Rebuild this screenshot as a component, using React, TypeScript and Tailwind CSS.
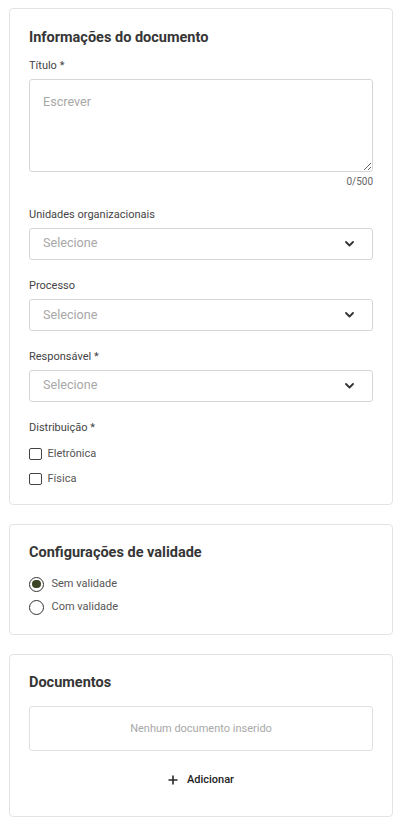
import React from "react";

const font = { fontFamily: "Roboto, 'Noto Sans', Arial, sans-serif" };

function Chevron() {
  return (
    <svg width="9" height="6" viewBox="0 0 9 6" fill="none" className="shrink-0">
      <path d="M1 1 L4.5 4.5 L8 1" stroke="#333" strokeWidth="1.8" strokeLinecap="round" strokeLinejoin="round" />
    </svg>
  );
}

function Label({ children }: { children: React.ReactNode }) {
  return <div className="text-[11px] leading-[16px] text-[#444] mb-[5px]">{children}</div>;
}

function Select() {
  return (
    <div className="h-[32px] w-full rounded-[3px] border border-[#d6d6d6] bg-white flex items-center justify-between pl-[13px] pr-[18px]">
      <span className="text-[12.6px] text-[#a8a8a8]">Selecione</span>
      <Chevron />
    </div>
  );
}

function Checkbox({ label }: { label: string }) {
  return (
    <div className="flex items-center h-[16px] gap-[6px]">
      <span className="w-[12.5px] h-[12.5px] border-[1.5px] border-[#444] rounded-[2px] bg-white shrink-0" />
      <span className="text-[11px] leading-[16px] text-[#555]">{label}</span>
    </div>
  );
}

function Radio({ label, checked }: { label: string; checked?: boolean }) {
  return (
    <div className="flex items-center h-[16px] gap-[7.5px]">
      <span className="w-[15px] h-[15px] rounded-full border-[1.5px] border-[#333] bg-white shrink-0 flex items-center justify-center">
        {checked && <span className="w-[8.5px] h-[8.5px] rounded-full bg-[#3b4426]" />}
      </span>
      <span className="text-[11px] leading-[16px] text-[#555]">{label}</span>
    </div>
  );
}

function Heading({ children }: { children: React.ReactNode }) {
  return <div className="text-[14.5px] leading-[20px] font-bold text-[#363636]">{children}</div>;
}

export default function App() {
  return (
    <div style={font} className="bg-white min-h-[825px] pl-[9px] pr-[10px] pt-[8px] pb-[8px]">
      {/* Card 1 */}
      <div className="border border-[#e3e3e3] rounded-[4px] bg-white px-[19px] pt-[18.5px] pb-[16.5px]">
        <Heading>Informações do documento</Heading>
        <div className="mt-[10.5px]">
          <Label>Título *</Label>
          <textarea
            placeholder="Escrever"
            className="block w-full h-[93px] rounded-[3px] border border-[#d6d6d6] px-[13px] py-[12.5px] text-[12.6px] leading-[18px] text-[#333] placeholder:text-[#a8a8a8] outline-none"
            style={font}
          />
          <div className="mt-[3px] text-right text-[10px] leading-[14px] text-[#666]">0/500</div>
        </div>
        <div className="mt-[17.5px]">
          <Label>Unidades organizacionais</Label>
          <Select />
        </div>
        <div className="mt-[18.5px]">
          <Label>Processo</Label>
          <Select />
        </div>
        <div className="mt-[17.5px]">
          <Label>Responsável *</Label>
          <Select />
        </div>
        <div className="mt-[18.5px]">
          <div className="text-[11px] leading-[16px] text-[#444]">Distribuição *</div>
          <div className="mt-[10px] flex flex-col gap-[9px]">
            <Checkbox label="Eletrônica" />
            <Checkbox label="Física" />
          </div>
        </div>
      </div>

      {/* Card 2 */}
      <div className="mt-[19px] border border-[#e3e3e3] rounded-[4px] bg-white px-[19px] pt-[18.5px] pb-[18.5px]">
        <Heading>Configurações de validade</Heading>
        <div className="mt-[13px] flex flex-col gap-[7px]">
          <Radio label="Sem validade" checked />
          <Radio label="Com validade" />
        </div>
      </div>

      {/* Card 3 */}
      <div className="mt-[19px] border border-[#e3e3e3] rounded-[4px] bg-white px-[19px] pt-[18.5px] pb-[20px]">
        <Heading>Documentos</Heading>
        <div className="mt-[13px] h-[45px] rounded-[3px] border border-[#e0e0e0] flex items-center justify-center">
          <span className="text-[11px] leading-[16px] text-[#a8a8a8]">Nenhum documento inserido</span>
        </div>
        <div className="mt-[12.5px] h-[32px] flex items-center justify-center gap-[9px]">
          <svg width="10" height="10" viewBox="0 0 10 10" className="shrink-0">
            <path d="M5 0.5 V9.5 M0.5 5 H9.5" stroke="#2a2a2a" strokeWidth="1.6" />
          </svg>
          <span className="text-[11px] leading-[16px] font-medium text-[#222]">Adicionar</span>
        </div>
      </div>
    </div>
  );
}
